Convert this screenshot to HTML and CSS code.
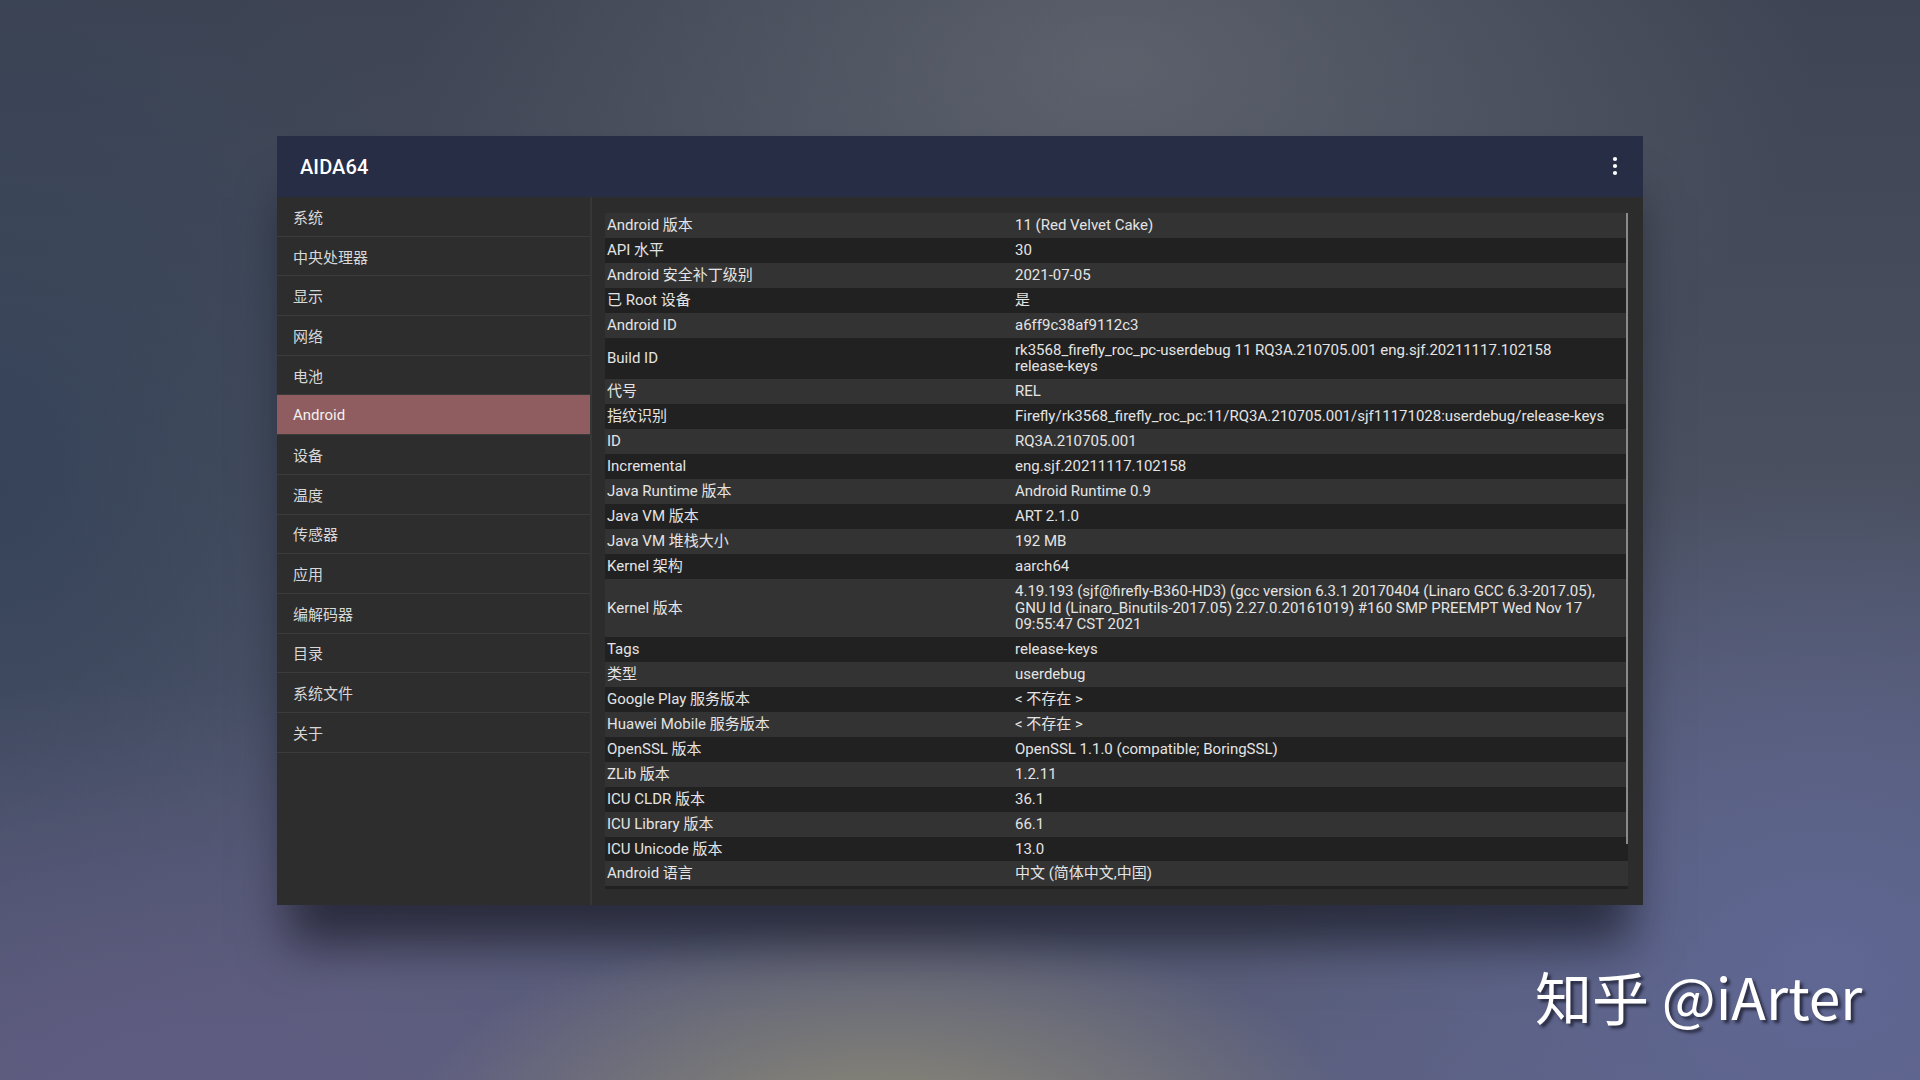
FILE: index.html
```html
<!DOCTYPE html>
<html lang="zh">
<head>
<meta charset="utf-8">
<title>AIDA64</title>
<link rel="stylesheet" href="styles.css">
</head>
<body>
<div class="page">
  <div class="window">
    <header class="titlebar">
      <span class="title">AIDA64</span>
      <svg class="menu" width="6" height="20" viewBox="0 0 6 20"><circle cx="3" cy="3" r="2.1" fill="#fff"/><circle cx="3" cy="10" r="2.1" fill="#fff"/><circle cx="3" cy="17" r="2.1" fill="#fff"/></svg>
    </header>
    <div class="body">
      <nav class="sidebar">
        <div class="item">系统</div>
        <div class="item">中央处理器</div>
        <div class="item">显示</div>
        <div class="item">网络</div>
        <div class="item">电池</div>
        <div class="item active">Android</div>
        <div class="item">设备</div>
        <div class="item">温度</div>
        <div class="item">传感器</div>
        <div class="item">应用</div>
        <div class="item">编解码器</div>
        <div class="item">目录</div>
        <div class="item">系统文件</div>
        <div class="item">关于</div>
      </nav>
      <main class="content">
        <div class="scroller">
          <div class="table">
            <div class="row"><div class="k">Android 版本</div><div class="v">11 (Red Velvet Cake)</div></div>
            <div class="row"><div class="k">API 水平</div><div class="v">30</div></div>
            <div class="row"><div class="k">Android 安全补丁级别</div><div class="v">2021-07-05</div></div>
            <div class="row"><div class="k">已 Root 设备</div><div class="v">是</div></div>
            <div class="row"><div class="k">Android ID</div><div class="v">a6ff9c38af9112c3</div></div>
            <div class="row"><div class="k">Build ID</div><div class="v">rk3568_firefly_roc_pc-userdebug 11 RQ3A.210705.001 eng.sjf.20211117.102158<br>release-keys</div></div>
            <div class="row"><div class="k">代号</div><div class="v">REL</div></div>
            <div class="row"><div class="k">指纹识别</div><div class="v">Firefly/rk3568_firefly_roc_pc:11/RQ3A.210705.001/sjf11171028:userdebug/release-keys</div></div>
            <div class="row"><div class="k">ID</div><div class="v">RQ3A.210705.001</div></div>
            <div class="row"><div class="k">Incremental</div><div class="v">eng.sjf.20211117.102158</div></div>
            <div class="row"><div class="k">Java Runtime 版本</div><div class="v">Android Runtime 0.9</div></div>
            <div class="row"><div class="k">Java VM 版本</div><div class="v">ART 2.1.0</div></div>
            <div class="row"><div class="k">Java VM 堆栈大小</div><div class="v">192 MB</div></div>
            <div class="row"><div class="k">Kernel 架构</div><div class="v">aarch64</div></div>
            <div class="row"><div class="k">Kernel 版本</div><div class="v">4.19.193 (sjf@firefly-B360-HD3) (gcc version 6.3.1 20170404 (Linaro GCC 6.3-2017.05),<br>GNU ld (Linaro_Binutils-2017.05) 2.27.0.20161019) #160 SMP PREEMPT Wed Nov 17<br>09:55:47 CST 2021</div></div>
            <div class="row"><div class="k">Tags</div><div class="v">release-keys</div></div>
            <div class="row"><div class="k">类型</div><div class="v">userdebug</div></div>
            <div class="row"><div class="k">Google Play 服务版本</div><div class="v">&lt; 不存在 &gt;</div></div>
            <div class="row"><div class="k">Huawei Mobile 服务版本</div><div class="v">&lt; 不存在 &gt;</div></div>
            <div class="row"><div class="k">OpenSSL 版本</div><div class="v">OpenSSL 1.1.0 (compatible; BoringSSL)</div></div>
            <div class="row"><div class="k">ZLib 版本</div><div class="v">1.2.11</div></div>
            <div class="row"><div class="k">ICU CLDR 版本</div><div class="v">36.1</div></div>
            <div class="row"><div class="k">ICU Library 版本</div><div class="v">66.1</div></div>
            <div class="row"><div class="k">ICU Unicode 版本</div><div class="v">13.0</div></div>
            <div class="row"><div class="k">Android 语言</div><div class="v">中文 (简体中文,中国)</div></div>
            <div class="row row-empty"></div>
          </div>
          <div class="scrollbar"></div>
        </div>
      </main>
    </div>
  </div>
  <div class="watermark">知乎 @iArter</div>
</div>
</body>
</html>
```

FILE: styles.css
```css
html, body {
  margin: 0;
  padding: 0;
}

body {
  width: 1920px;
  height: 1080px;
  overflow: hidden;
  font-family: Roboto, "Noto Sans CJK SC", sans-serif;
  background:
    radial-gradient(ellipse 480px 230px at 46% 106%, rgba(165, 158, 112, 0.7), rgba(165, 158, 112, 0) 100%),
    radial-gradient(ellipse 700px 420px at 58% 6%, rgba(104, 108, 118, 0.7), rgba(104, 108, 118, 0) 100%),
    radial-gradient(ellipse 600px 500px at 95% 90%, rgba(96, 104, 150, 0.9), rgba(96, 104, 150, 0) 100%),
    radial-gradient(ellipse 600px 400px at 8% 100%, rgba(96, 92, 130, 0.9), rgba(96, 92, 130, 0) 100%),
    radial-gradient(ellipse 500px 700px at 0% 45%, rgba(52, 66, 88, 0.9), rgba(52, 66, 88, 0) 100%),
    linear-gradient(180deg, #3e4453 0%, #4a5060 45%, #555a72 75%, #5b5f7e 100%);
}

.page {
  position: relative;
  width: 1920px;
  height: 1080px;
  box-sizing: border-box;
  padding: 136px 0 0 277px;
}

.window {
  width: 1366px;
  height: 769px;
  display: flex;
  flex-direction: column;
  box-shadow: 0 50px 45px -12px rgba(10, 12, 20, 0.6);
}

.titlebar {
  height: 61px;
  flex: none;
  background: #272d45;
  display: flex;
  align-items: center;
  justify-content: space-between;
  padding: 0 25px 0 23px;
}

.title {
  color: #ffffff;
  font-size: 20px;
  font-weight: 500;
  letter-spacing: 0.1px;
}

.menu {
  display: block;
  margin-top: -2px;
}

.body {
  flex: 1;
  display: flex;
  min-height: 0;
}

.sidebar {
  width: 313px;
  flex: none;
  background: #2d2d2d;
  border-right: 2px solid #363636;
}

.item {
  height: 38.7px;
  border-bottom: 1px solid #3b3b3b;
  padding-left: 16px;
  display: flex;
  align-items: center;
  color: #d8d8d8;
  font-size: 15px;
}

.item:first-child {
  margin-top: 1px;
  height: 37.7px;
}

.item.active {
  background: #8f5d5f;
  color: #f4f0f0;
}

.content {
  flex: 1;
  background: #2c2c2c;
  padding: 16px 15px 16px 13px;
}

.scroller {
  position: relative;
  height: 676px;
  overflow: hidden;
}

.table {
  display: flex;
  flex-direction: column;
}

.row {
  display: grid;
  grid-template-columns: 408px 1fr;
  align-items: center;
  padding: 4px 0;
  line-height: 16.9px;
  font-size: 15px;
  color: #e4e4e4;
}

.row-empty {
  height: 16.9px;
}

.row:nth-child(odd) {
  background: #333333;
}

.row:nth-child(even) {
  background: #212121;
}

.k, .v {
  padding: 0 2px;
  white-space: nowrap;
}

.scrollbar {
  position: absolute;
  top: 0;
  right: -1px;
  width: 3px;
  height: 631px;
  background: #8a8a8a;
}

.watermark {
  position: absolute;
  left: 1535px;
  top: 967px;
  font-family: "Noto Sans CJK SC", sans-serif;
  font-size: 57px;
  font-weight: 400;
  line-height: 1;
  color: #ffffff;
  white-space: nowrap;
  text-shadow: 3px 3px 3px rgba(20, 22, 35, 0.7);
}
```
